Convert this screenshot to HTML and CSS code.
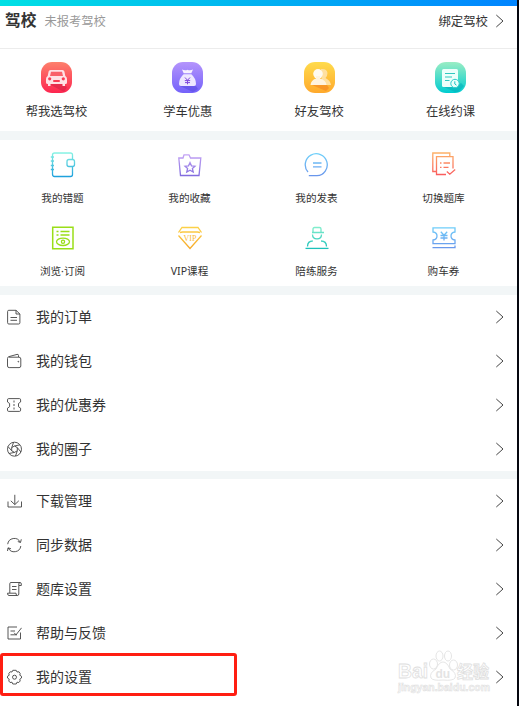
FILE: index.html
```html
<!DOCTYPE html>
<html lang="zh-CN">
<head>
    <meta charset="UTF-8">
    <meta name="viewport" content="width=device-width, initial-scale=1.0">
    <title>我的</title>
    <link rel="stylesheet" href="styles.css">
</head>
<body>
    <!-- shared gradients and the arrow -->
    <svg class="defs" width="0" height="0">
        <defs>
            <linearGradient id="g-red" x2="0" y2="1"><stop stop-color="#fd806c"/><stop offset="1" stop-color="#fd2650"/></linearGradient>
            <linearGradient id="g-purple" x2="0" y2="1"><stop stop-color="#b494fc"/><stop offset="1" stop-color="#7462fa"/></linearGradient>
            <linearGradient id="g-yellow" x2="0" y2="1"><stop stop-color="#ffdb4c"/><stop offset="1" stop-color="#ffa92c"/></linearGradient>
            <linearGradient id="g-teal" x2="0" y2="1"><stop stop-color="#9aedc4"/><stop offset="1" stop-color="#00ccd0"/></linearGradient>
            <linearGradient id="s-cyan" gradientUnits="userSpaceOnUse" x1="0" y1="0" x2="0" y2="26"><stop stop-color="#8af5e4"/><stop offset="1" stop-color="#189cdc"/></linearGradient>
            <linearGradient id="s-purple" gradientUnits="userSpaceOnUse" x1="0" y1="0" x2="0" y2="26"><stop stop-color="#ccaaf8"/><stop offset="1" stop-color="#7a66dc"/></linearGradient>
            <linearGradient id="s-blue" gradientUnits="userSpaceOnUse" x1="0" y1="0" x2="0" y2="26"><stop stop-color="#6fd4fb"/><stop offset="1" stop-color="#6890ea"/></linearGradient>
            <linearGradient id="s-red" gradientUnits="userSpaceOnUse" x1="0" y1="0" x2="0" y2="26"><stop stop-color="#fdb468"/><stop offset="1" stop-color="#f9505c"/></linearGradient>
            <linearGradient id="s-green" gradientUnits="userSpaceOnUse" x1="0" y1="0" x2="0" y2="26"><stop stop-color="#8cf2ce"/><stop offset="1" stop-color="#10bcb8"/></linearGradient>
            <linearGradient id="s-gold" gradientUnits="userSpaceOnUse" x1="0" y1="0" x2="0" y2="26"><stop stop-color="#fdd54c"/><stop offset="1" stop-color="#f6a524"/></linearGradient>
            <symbol id="arrow" viewBox="0 0 10 14"><path d="M1.3 1 L8 7 L1.3 13"/></symbol>
        </defs>
    </svg>

    <div class="page">
        <div class="top-bar"></div>

        <div class="header">
            <span class="title">驾校</span>
            <span class="status">未报考驾校</span>
            <a class="bind">绑定驾校</a>
            <svg class="arrow"><use href="#arrow"/></svg>
        </div>

        <div class="cards">
            <div class="card">
                <svg class="card-icon" viewBox="0 0 31 31">
                    <rect width="31" height="31" rx="11" fill="url(#g-red)"/>
                    <path d="M8 22 L21 22 L26 25 L23 30 Z" fill="#d31f46" opacity=".55"/>
                    <path d="M9.5 8 H21.5 Q23 8 23.4 9.5 L24.3 14 Q26 15 26 17 V20.5 Q26 22 24.5 22 H24 V24 H21.5 V22 H9.5 V24 H7 V22 Q5 22 5 20.5 V17 Q5 15 6.7 14 L7.6 9.5 Q8 8 9.5 8 Z" fill="#ffe2e6"/>
                    <path d="M10 9.7 H21 L22 14 H9 Z" fill="#f9616a"/>
                    <circle cx="8.7" cy="16.8" r="1.6" fill="#f83d55"/>
                    <circle cx="22.3" cy="16.8" r="1.6" fill="#f83d55"/>
                    <rect x="12" y="18" width="7" height="2" rx="1" fill="#f83d55"/>
                </svg>
                <span>帮我选驾校</span>
            </div>
            <div class="card">
                <svg class="card-icon" viewBox="0 0 31 31">
                    <rect width="31" height="31" rx="11" fill="url(#g-purple)"/>
                    <path d="M8 24 H24 L26 27 L21 30 Z" fill="#5345dd" opacity=".5"/>
                    <path d="M10 7.5 Q13 9 15.5 7.8 Q18 9 21 7.5 L19.3 11.3 H11.7 Z" fill="#f7f1ff"/>
                    <path d="M11.6 12.3 H19.4 Q24 16.5 24 22 Q24 24 22 24 H9 Q7 24 7 22 Q7 16.5 11.6 12.3 Z" fill="#eee8ff"/>
                    <path d="M13 15.5 L15.5 18.3 L18 15.5 M12.8 18.6 H18.2 M13 20.6 H18 M15.5 18.3 V22.3" fill="none" stroke="#8149dc" stroke-width="1"/>
                </svg>
                <span>学车优惠</span>
            </div>
            <div class="card">
                <svg class="card-icon" viewBox="0 0 31 31">
                    <rect width="31" height="31" rx="11" fill="url(#g-yellow)"/>
                    <path d="M8 23 H23 L25 26 L22 29 Z" fill="#f2791c" opacity=".5"/>
                    <path d="M17 7 Q23 6.5 23.5 11 Q23.5 14 21.5 16 Q26.5 18.5 27 23 H18 Z" fill="#ffe0a0"/>
                    <circle cx="14" cy="11.8" r="4.8" fill="#fffaf0"/>
                    <path d="M12 14 H16 V16.5 Q22 18 22.5 23 H6.5 Q7 18 12 16.5 Z" fill="#fff3df"/>
                </svg>
                <span>好友驾校</span>
            </div>
            <div class="card">
                <svg class="card-icon" viewBox="0 0 31 31">
                    <rect width="31" height="31" rx="11" fill="url(#g-teal)"/>
                    <path d="M9 25 H20 L26 21 L29 24 L23 30 H20 Z" fill="#00a9b6" opacity=".5"/>
                    <rect x="7" y="7" width="16" height="18" rx="1.5" fill="#edfffb"/>
                    <path d="M10 11.5 H20 M10 15 H17 M10 18.5 H14.5" stroke="#32c9c0" stroke-width="1.2"/>
                    <circle cx="20" cy="21.5" r="4.2" fill="#e9fffb" stroke="#2ccbc9" stroke-width="1"/>
                    <path d="M19.8 19.3 V22 L21.5 23.2" fill="none" stroke="#1dc4c6"/>
                </svg>
                <span>在线约课</span>
            </div>
        </div>

        <div class="grid">
            <div class="item">
                <svg class="item-icon" viewBox="0 0 26 26" stroke="url(#s-cyan)">
                    <path d="M22.5 7.5 V3 Q22.5 1 20.5 1 H4.5 Q2.5 1 2.5 3 V22 Q2.5 24.5 4.5 24.5 H20.5 Q22.5 24.5 22.5 22.5 V14.5"/>
                    <rect x="17" y="7.5" width="7.5" height="7" rx="2"/>
                    <path d="M.8 5 H4 M.8 9 H4 M.8 13.5 H4 M.8 17.5 H4"/>
                </svg>
                <span>我的错题</span>
            </div>
            <div class="item">
                <svg class="item-icon" viewBox="0 0 26 26" stroke="url(#s-purple)">
                    <path d="M1.8 6 H6 L7 2.8 H12 L13.5 6 H23.8 L22 23.5 H3.5 Z"/>
                    <path d="M13 10.5 L14.5 13.8 L18 14.2 L15.4 16.5 L16.2 20 L13 18.2 L9.8 20 L10.6 16.5 L8 14.2 L11.5 13.8 Z"/>
                </svg>
                <span>我的收藏</span>
            </div>
            <div class="item">
                <svg class="item-icon" viewBox="0 0 26 26" stroke="url(#s-blue)">
                    <path d="M4 20 A11 11 0 1 1 13 23.7 H4.8"/>
                    <path d="M9 11 H17.5 M9 14.8 H17.5"/>
                </svg>
                <span>我的发表</span>
            </div>
            <div class="item">
                <svg class="item-icon" viewBox="0 0 26 26" stroke="url(#s-red)">
                    <path d="M5 19.5 H1.8 V1 H18.8 V4"/>
                    <path d="M15 22.5 H5.5 V4.7 H22 V16.5"/>
                    <path d="M9 11 H10.5 M12.5 11 H19 M9 15.3 H10.5 M12.5 15.3 H17.5 M15.8 19.5 L18.8 22.2 L24.2 17.5"/>
                </svg>
                <span>切换题库</span>
            </div>
            <div class="item">
                <svg class="item-icon" viewBox="0 0 26 26" stroke="#9ade18">
                    <path d="M2.7 2.2 H23 V23.8 H2.7 Z" stroke-width="1.5"/>
                    <path d="M6.5 6.5 H8.5 M10.5 6.5 H19.5 M6.5 10 H8.5 M10.5 10 H19.5" stroke-width="1.4"/>
                    <ellipse cx="13" cy="16.8" rx="6.5" ry="3.7"/>
                    <circle cx="13" cy="16.8" r="1.6"/>
                </svg>
                <span class="latin">浏览·订阅</span>
            </div>
            <div class="item">
                <svg class="item-icon" viewBox="0 0 26 26" stroke="url(#s-gold)">
                    <path d="M1.5 7.5 L5 2.5 H21 L24.5 7.5 M3 7.5 L5.5 7 H20.5 L23 7.5 M1.5 10.5 L13 23.5 L24.5 10.5"/>
                    <text class="vip" x="13" y="16">VIP</text>
                </svg>
                <span class="latin">VIP课程</span>
            </div>
            <div class="item">
                <svg class="item-icon" viewBox="0 0 26 26" stroke="url(#s-green)">
                    <path d="M9 7.5 V4 Q9 2.5 10.5 2.5 H15.5 Q17 2.5 17 4 V7.5 M8 7.5 H20"/>
                    <path d="M8.5 9.5 Q8.5 13.8 13 13.8 Q17.5 13.8 17.5 9.5"/>
                    <path d="M3.5 21.5 Q3.5 16 8.8 16 M17 16 Q22.5 16 22.5 21.5"/>
                    <path d="M1.5 23.4 H24.5"/>
                </svg>
                <span>陪练服务</span>
            </div>
            <div class="item">
                <svg class="item-icon" viewBox="0 0 26 26" stroke="url(#s-blue)">
                    <path d="M2 2.8 H24 V7 Q20 7.5 20 11 Q20 14.5 24 15 V18.7 H2 V15 Q6 14.5 6 11 Q6 7.5 2 7 Z M1.5 22.7 H24 V20.5"/>
                    <path d="M9.8 6.8 L13 10.3 L16.2 6.8 M9.5 10.5 H16.5 M9.5 13 H16.5 M13 10.3 V15.5"/>
                </svg>
                <span>购车券</span>
            </div>
        </div>

        <div class="list">
            <div class="row">
                <svg class="row-icon" viewBox="0 0 16 16"><path d="M10 1.3 H2.8 Q1.6 1.3 1.6 2.5 V13.7 Q1.6 15 2.8 15 H12.7 Q13.9 15 13.9 13.7 V5 Z M10 1.3 V5 H13.9 M4.5 8.5 H11 M4.5 11.3 H11"/></svg>
                <span>我的订单</span>
                <svg class="arrow"><use href="#arrow"/></svg>
            </div>
            <div class="row">
                <svg class="row-icon" viewBox="0 0 16 16"><path d="M3 4.2 H13 Q14.8 4.2 14.8 6 V13 Q14.8 14.6 13 14.6 H3.2 Q1.5 14.6 1.5 13 V5.5 Q1.5 4 3 3.6 L11 1.4 Q12.5 1 12.5 2.5 V4"/><circle cx="12.3" cy="8.7" r=".4"/></svg>
                <span>我的钱包</span>
                <svg class="arrow"><use href="#arrow"/></svg>
            </div>
            <div class="row">
                <svg class="row-icon" viewBox="0 0 16 16"><path d="M1.5 5 V2.8 Q1.5 1.6 2.7 1.6 H13.4 Q14.6 1.6 14.6 2.8 V5 L12.5 6.5 V9.7 L14.6 11.2 V13.2 Q14.6 14.4 13.4 14.4 H2.7 Q1.5 14.4 1.5 13.2 V11.2 L3.6 9.7 V6.5 Z"/><path d="M8 3.5 V5.5 M8 7 V9 M8 10.5 V12.5"/></svg>
                <span>我的优惠券</span>
                <svg class="arrow"><use href="#arrow"/></svg>
            </div>
            <div class="row">
                <svg class="row-icon" viewBox="0 0 16 16"><circle cx="8.5" cy="8.2" r="7"/><path d="M8.5 5 L11.3 6.6 V9.8 L8.5 11.4 L5.7 9.8 V6.6 Z M8.5 5 L14 3.8 M11.3 6.6 L14.9 11 M11.3 9.8 L9.5 15 M8.5 11.4 L3 12.5 M5.7 9.8 L2 5.5 M5.7 6.6 L7.6 1.3"/></svg>
                <span>我的圈子</span>
                <svg class="arrow"><use href="#arrow"/></svg>
            </div>
        </div>

        <div class="list">
            <div class="row">
                <svg class="row-icon" viewBox="0 0 16 16"><path d="M8.8 1.8 V11.5 M4.8 7.8 L8.8 11.6 L12.8 7.8 M2 8.5 V14 H15.5 V8.5"/></svg>
                <span>下载管理</span>
                <svg class="arrow"><use href="#arrow"/></svg>
            </div>
            <div class="row">
                <svg class="row-icon" viewBox="0 0 16 16"><path d="M1.7 7.2 A6.6 6.6 0 0 1 14.2 5.2 M15.3 2.3 L14.5 5.5 L11.8 4.5 M14.8 9 A6.6 6.6 0 0 1 2.3 11 M1.5 14 L2 10.8 L5 11.8"/></svg>
                <span>同步数据</span>
                <svg class="arrow"><use href="#arrow"/></svg>
            </div>
            <div class="row">
                <svg class="row-icon" viewBox="0 0 16 16"><path d="M3.8 12 V2.7 Q3.8 1.5 5 1.5 H14 Q15.3 1.5 15.3 3 V4.5 H12.8 V13 Q12.8 14.5 11.3 14.5 H3 Q1.5 14.5 1.5 12.2 H10 Q10 14.5 11.3 14.5 M12.8 4.5 V3 Q12.8 1.5 14 1.5 M6 5.5 H10.5 M6 8.5 H10.5"/></svg>
                <span>题库设置</span>
                <svg class="arrow"><use href="#arrow"/></svg>
            </div>
            <div class="row">
                <svg class="row-icon" viewBox="0 0 16 16"><path d="M11 2 H2 V14 H14.5 V7.5 M4.5 6 H9 M4.5 9.8 H11 M8.2 7.8 L10 9.8 L15.6 2.8"/></svg>
                <span>帮助与反馈</span>
                <svg class="arrow"><use href="#arrow"/></svg>
            </div>
            <div class="row">
                <svg class="row-icon" viewBox="0 0 16 16"><path d="M6.8 1.3 H10.2 L11 3 L13 2.8 L14.2 4.5 L13.8 6.2 L15.5 7.3 V9 L13.8 10.2 L14.2 12 L12.8 13.5 L11 13.2 L10.2 15 H6.8 L6 13.2 L4 13.5 L2.8 12 L3.2 10.2 L1.5 9 V7.3 L3.2 6.2 L2.8 4.5 L4.2 2.8 L6 3 Z"/><circle cx="8.5" cy="8.2" r="2"/></svg>
                <span>我的设置</span>
                <svg class="arrow"><use href="#arrow"/></svg>
            </div>
        </div>

        <div class="highlight"></div>

        <svg class="watermark" viewBox="0 0 96 48">
            <g class="paw">
                <ellipse cx="37.500" cy="15" rx="4" ry="5"/>
                <ellipse cx="43.500" cy="7" rx="3.500" ry="5"/>
                <ellipse cx="52" cy="7" rx="3.500" ry="5"/>
                <ellipse cx="57.500" cy="16" rx="4" ry="5"/>
                <path d="M47 13 Q51 13 54 20 Q61 24 59 29 Q57 32 47 31 Q37 32 35 29 Q33 24 40 20 Q43 13 47 13 Z"/>
            </g>
            <text class="wm-brand" x="2" y="29" textLength="30" lengthAdjust="spacingAndGlyphs">Bai</text>
            <text class="wm-du" x="39.500" y="28.500">du</text>
            <text class="wm-cn" x="61" y="29" textLength="32" lengthAdjust="spacingAndGlyphs">经验</text>
            <text class="wm-url" x="2" y="42" textLength="92" lengthAdjust="spacingAndGlyphs">jingyan.baidu.com</text>
        </svg>
    </div>
</body>
</html>
```

FILE: styles.css
```css
* {
    box-sizing: border-box;
}
body {
    margin: 0;
    font-family: "Noto Sans CJK SC", sans-serif;
    color: #333;
    background-color: #fff;
}
.defs {
    position: absolute;
}
.page {
    position: relative;
    width: 519px;
    height: 706px;
    border-right: 2px solid #05070f;
    overflow: hidden;
}
.top-bar {
    height: 6px;
    background: linear-gradient(to right, #00e0e4, #0084ff);
}
.header {
    display: flex;
    align-items: center;
    height: 43px;
    padding: 0 12px 13px 5px;
    border-bottom: 1px solid #ececec;
    line-height: 20px;
}
.title {
    font-size: 15.7px;
    font-weight: bold;
    line-height: 18px;
    padding-bottom: 2px;
}
.status {
    margin-left: 8px;
    font-size: 12.3px;
    color: #999;
}
.bind {
    margin-left: auto;
    margin-right: 7px;
    font-size: 12.4px;
}
.arrow {
    width: 10px;
    height: 14px;
    fill: none;
    stroke: #444;
    stroke-width: 1;
}
.cards {
    display: flex;
    justify-content: space-between;
    height: 82px;
    padding: 13px 34px 0 24px;
}
.card {
    display: flex;
    flex-direction: column;
    align-items: center;
    gap: 8px;
    width: 65px;
    font-size: 12.3px;
    line-height: 20px;
    white-space: nowrap;
}
.card-icon {
    width: 31px;
    height: 31px;
}
.grid {
    display: grid;
    grid-template-columns: repeat(4, 127px);
    grid-auto-rows: 73px;
    height: 155px;
    margin-left: -1px;
    padding-top: 12px;
    border-top: 9px solid #f2f6f7;
}
.item {
    display: flex;
    flex-direction: column;
    align-items: center;
    gap: 12px;
    font-size: 10.6px;
    line-height: 16px;
}
.item-icon {
    width: 26px;
    height: 26px;
    fill: none;
    stroke-width: 1.3;
}
.latin {
    font-family: "Noto Sans", "Noto Sans CJK SC", sans-serif;
}
.vip {
    font-family: "Liberation Serif", serif;
    font-size: 8px;
    text-anchor: middle;
    fill: #f9b936;
    stroke: none;
}
.list {
    border-top: 9px solid #f2f6f7;
}
.list + .list {
    border-top-width: 8px;
}
.row {
    display: flex;
    align-items: center;
    height: 44px;
    padding: 0 12px 0 6px;
    font-size: 14px;
    line-height: 20px;
}
.row span {
    padding-bottom: 2px;
}
.row .arrow {
    margin-left: auto;
}
.row-icon {
    width: 16px;
    height: 16px;
    margin-right: 14px;
    fill: none;
    stroke: #444;
    stroke-width: .9;
}
.highlight {
    position: absolute;
    left: 0;
    top: 653px;
    width: 237px;
    height: 43px;
    border: 3px solid #ff1e12;
    border-radius: 3px;
}
.watermark {
    position: absolute;
    left: 396px;
    top: 649px;
    width: 96px;
    height: 48px;
    fill: #fff;
    stroke: #dedede;
    stroke-width: .8;
    font-family: "Liberation Sans", sans-serif;
    font-weight: bold;
}
.wm-brand {
    font-size: 21px;
}
.wm-du {
    font-size: 12px;
    fill: #e4e4e4;
    stroke: none;
}
.wm-cn {
    font-family: "Noto Sans CJK SC", sans-serif;
    font-size: 17px;
}
.wm-url {
    font-size: 10px;
    fill: #f8f8f8;
    stroke-width: .5;
}
```
